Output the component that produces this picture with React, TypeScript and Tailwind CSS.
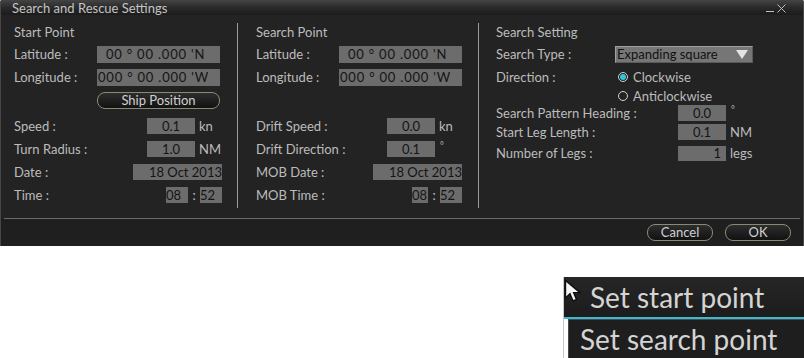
import React from 'react';

const FONT = "font-['Lato',sans-serif]";

const Label: React.FC<{ children: React.ReactNode; className?: string }> = ({ children, className = '' }) => (
  <span className={`text-[13px] leading-[15px] text-[#bcbcbc] whitespace-nowrap ${className}`}>{children}</span>
);

const Box: React.FC<{ children: React.ReactNode; className?: string }> = ({ children, className = '' }) => (
  <div className={`h-full bg-[#6c6c6c] text-[13px] leading-[15px] text-[#141414] flex items-center whitespace-pre ${className}`}>
    {children}
  </div>
);

const PillButton: React.FC<{ children: React.ReactNode; className?: string }> = ({ children, className = '' }) => (
  <div
    className={`h-[17px] rounded-[8px] border border-[#8a8a72] bg-gradient-to-b from-[#2e2e2e] to-[#121212] text-[13px] leading-[15px] text-[#d0d0d0] flex items-center justify-center ${className}`}
  >
    {children}
  </div>
);

const Unit: React.FC<{ children: React.ReactNode }> = ({ children }) => (
  <span className="w-[27px] pl-[4px] text-[13px] leading-[15px] text-[#bcbcbc] self-end">{children}</span>
);

const Deg = () => <span className="w-[27px] pl-[5px] text-[9px] leading-[10px] self-start text-[#bcbcbc]">°</span>;

const Radio: React.FC<{ checked?: boolean }> = ({ checked }) => (
  <span className="w-[10px] h-[10px] rounded-full border border-[#d0d0d0] flex items-center justify-center">
    {checked && <span className="w-[6px] h-[6px] rounded-full bg-[#35c4dc]" />}
  </span>
);

const PointColumn: React.FC<{ title: string; first: boolean }> = ({ title, first }) => (
  <div className="flex flex-col">
    <div className="h-[17px] mt-[1px] flex items-center">
      <Label>{title}</Label>
    </div>
    <div className="h-[17px] mt-[5px] flex items-center">
      <Label className="w-[83px]">Latitude :</Label>
      <Box className="w-[123px] pl-[9px] tracking-[0.8px]">{"00 ° 00 .000 'N"}</Box>
    </div>
    <div className="h-[17px] mt-[6px] flex items-center">
      <Label className="w-[83px]">Longitude :</Label>
      <Box className="w-[123px] pl-[1px] tracking-[0.8px]">{"000 ° 00 .000 'W"}</Box>
    </div>
    <div className="h-[17px] mt-[6px] flex items-center">
      {first && <PillButton className="ml-[83px] w-[123px]">Ship Position</PillButton>}
    </div>
    <div className="h-[16px] mt-[9px] flex items-center">
      <Label className="flex-1">{first ? 'Speed :' : 'Drift Speed :'}</Label>
      <Box className="w-[48px] justify-center">{first ? '0.1' : '0.0'}</Box>
      <Unit>kn</Unit>
    </div>
    <div className="h-[16px] mt-[7px] flex items-center">
      <Label className="flex-1">{first ? 'Turn Radius :' : 'Drift Direction :'}</Label>
      <Box className="w-[48px] justify-center">{first ? '1.0' : '0.1'}</Box>
      {first ? <Unit>NM</Unit> : <Deg />}
    </div>
    <div className="h-[16px] mt-[7px] flex items-center">
      <Label className="flex-1">{first ? 'Date :' : 'MOB Date :'}</Label>
      <Box className="w-[89px] justify-end">18 Oct 2013</Box>
    </div>
    <div className="h-[16px] mt-[7px] flex items-center">
      <Label className="flex-1">{first ? 'Time :' : 'MOB Time :'}</Label>
      <Box className={first ? 'w-[22px]' : 'w-[16px]'}>08</Box>
      <span className="w-[12px] text-center text-[13px] leading-[15px] text-[#bcbcbc]">:</span>
      <Box className="w-[22px]">52</Box>
    </div>
  </div>
);

const Cursor = () => (
  <svg width="18" height="24" viewBox="0 0 18 24" className="shrink-0 self-start mt-[2px]">
    <path
      d="M1.5 1.5 L1.5 19 L6 14.8 L9 22 L12.5 20.5 L9.6 13.6 L16 13.6 Z"
      fill="#f6f6f6"
      stroke="#0e0e0e"
      strokeWidth="1.4"
      strokeLinejoin="miter"
    />
  </svg>
);

export default function App() {
  return (
    <div className={`w-[804px] h-[358px] bg-white overflow-hidden ${FONT}`}>
      {/* dialog */}
      <div className="w-[804px] h-[246px] bg-[#232323] border-x border-[#474747] rounded-t-[2px] flex flex-col">
        {/* title bar */}
        <div className="h-[15px] bg-gradient-to-b from-[#444444] via-[#2a2a2a] to-[#1b1b1b] flex items-end px-[11px]">
          <span className="text-[13px] leading-[14px] text-[#c4c4c4]">Search and Rescue Settings</span>
          <div className="ml-auto flex items-end gap-[3px] pb-[2px] pr-[6px]">
            <span className="w-[8px] h-[1px] bg-[#bcbcbc] mb-[1px]" />
            <svg width="9" height="9" viewBox="0 0 9 9">
              <path d="M0.5 0.5 L8.5 8.5 M8.5 0.5 L0.5 8.5" stroke="#bcbcbc" strokeWidth="1" />
            </svg>
          </div>
        </div>

        {/* body */}
        <div className="h-[203px] flex pt-[8px]">
          <div className="w-[236px] pl-[13px] pr-[15px]">
            <PointColumn title="Start Point" first />
          </div>
          <div className="w-[241px] h-[185px] border-l border-[#9a9a9a] pl-[18px] pr-[16px]">
            <PointColumn title="Search Point" first={false} />
          </div>
          <div className="flex-1 h-[185px] border-l border-[#9a9a9a] pl-[17px]">
            <div className="flex flex-col">
              <div className="h-[17px] mt-[1px] flex items-center">
                <Label>Search Setting</Label>
              </div>
              <div className="h-[17px] mt-[5px] flex items-center">
                <Label className="w-[119px]">Search Type :</Label>
                <div className="w-[138px] h-full bg-[#767676] border border-t-[#a0a0a0] border-l-[#a0a0a0] border-r-[#5a5a5a] border-b-[#5a5a5a] flex items-center pl-[1px] pr-[4px]">
                  <span className="text-[13px] leading-[15px] text-[#111]">Expanding square</span>
                  <svg width="12" height="9" viewBox="0 0 12 9" className="ml-auto">
                    <path d="M0 0 L12 0 L6 9 Z" fill="#e4e4e4" />
                  </svg>
                </div>
              </div>
              <div className="h-[16px] mt-[6px] flex items-center">
                <Label className="w-[122px]">Direction :</Label>
                <Radio checked />
                <Label className="ml-[5px]">Clockwise</Label>
              </div>
              <div className="h-[16px] mt-[3px] flex items-center pl-[122px]">
                <Radio />
                <Label className="ml-[5px]">Anticlockwise</Label>
              </div>
              <div className="h-[16px] mt-[1px] flex items-center">
                <Label className="w-[182px]">Search Pattern Heading :</Label>
                <Box className="w-[48px] justify-center">0.0</Box>
                <Deg />
              </div>
              <div className="h-[16px] mt-[3px] flex items-center">
                <Label className="w-[182px]">Start Leg Length :</Label>
                <Box className="w-[48px] justify-center">0.1</Box>
                <Unit>NM</Unit>
              </div>
              <div className="h-[15px] mt-[6px] flex items-center">
                <Label className="w-[182px]">Number of Legs :</Label>
                <Box className="w-[48px] justify-end pr-[5px]">1</Box>
                <Unit>legs</Unit>
              </div>
            </div>
          </div>
        </div>

        {/* footer */}
        <div className="mx-[3px] h-[1px] bg-[#6a6a6a]" />
        <div className="flex-1 bg-[#1f1f1f] flex items-center justify-end gap-[12px] pr-[12px] pb-[1px]">
          <PillButton className="w-[66px]">Cancel</PillButton>
          <PillButton className="w-[66px]">OK</PillButton>
        </div>
      </div>

      {/* context menu */}
      <div className="flex justify-end mt-[31px]">
        <div className="w-[241px] flex flex-col border-l border-[#c8c8c8]">
          <div className="h-[40px] bg-gradient-to-b from-[#262626] to-[#1c1c1c] flex items-center">
            <Cursor />
            <span className="ml-[8px] text-[28px] leading-none text-[#d4d4d4] whitespace-nowrap">Set start point</span>
          </div>
          <div className="h-[2px] bg-[#3bb9d2]" />
          <div className="h-[39px] bg-[#1e1e1e] border-l border-t border-[#4a4a4a] ml-[4px] flex items-center pl-[11px]">
            <span className="text-[28px] leading-none text-[#d4d4d4] whitespace-nowrap">Set search point</span>
          </div>
        </div>
      </div>
    </div>
  );
}
